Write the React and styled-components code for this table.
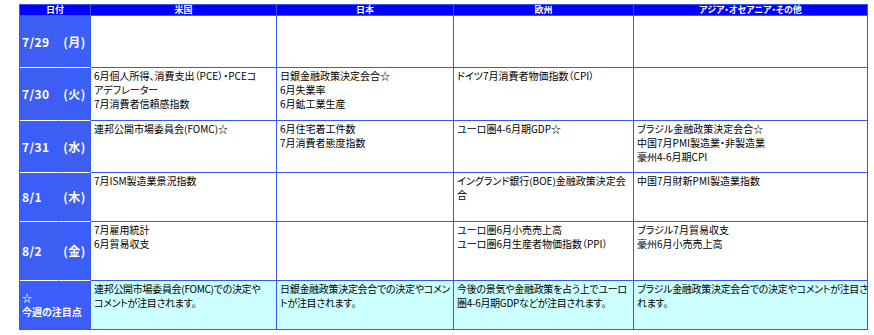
import styled, { createGlobalStyle } from 'styled-components';

const Global = createGlobalStyle`
  body {
    margin: 0;
    background: #fff;
    font-family: "Noto Sans CJK JP", "Noto Sans", sans-serif;
  }
`;

const BORDER = '#3558f0';

const Page = styled.div`
  padding: 4px 0 0 19px;
`;

const Table = styled.table`
  width: 849px;
  table-layout: fixed;
  border-collapse: separate;
  border-spacing: 0;
  border-top: 1px solid ${BORDER};
  border-left: 1px solid ${BORDER};
`;

const Row = styled.tr`
  height: ${p => p.$h}px;
`;

const HeadCell = styled.th`
  padding: 0;
  height: 10px;
  background: #0000ff;
  color: #fff;
  font-size: 9px;
  line-height: 10px;
  font-weight: bold;
  font-feature-settings: "palt";
  text-align: center;
  border-right: 1px solid ${BORDER};
  border-bottom: 1px solid ${BORDER};
  white-space: nowrap;
`;

const DateCell = styled.td`
  padding: 0 2px;
  vertical-align: middle;
  text-align: ${p => (p.$center ? 'center' : 'left')};
  background-color: #3d5ef5;
  background-image: repeating-conic-gradient(#3355ef 0 25%, #4868fb 0 50%);
  background-size: 2px 2px;
  color: #fff;
  font-size: ${p => (p.$small ? 10 : 12)}px;
  line-height: 14px;
  font-weight: bold;
  font-feature-settings: "palt";
  letter-spacing: ${p => (p.$small ? 0 : 0.4)}px;
  border-right: 1px solid ${p => (p.$inner ? 'transparent' : BORDER)};
  border-bottom: 1px solid ${p => (p.$last ? BORDER : '#ffffff')};
  white-space: nowrap;
`;

const Cell = styled.td`
  padding: 1px 0 0 3px;
  vertical-align: top;
  background: ${p => (p.$note ? '#ccffff' : '#fff')};
  color: #000;
  font-size: 10px;
  line-height: 14px;
  letter-spacing: ${p => (p.$note ? -0.3 : 0)}px;
  font-feature-settings: "palt";
  border-right: 1px solid ${BORDER};
  border-bottom: 1px solid ${BORDER};
  white-space: nowrap;
  overflow: hidden;
`;

const Line = styled.div`
  height: 14px;
`;

const rows = [
  { date: '7/29', day: '(月)', h: 52, cells: [[], [], [], []] },
  {
    date: '7/30',
    day: '(火)',
    h: 53,
    cells: [
      ['6月個人所得、消費支出（PCE）・PCEコ', 'アデフレーター', '7月消費者信頼感指数'],
      ['日銀金融政策決定会合☆', '6月失業率', '6月鉱工業生産'],
      ['ドイツ7月消費者物価指数（CPI）'],
      [],
    ],
  },
  {
    date: '7/31',
    day: '(水)',
    h: 52,
    cells: [
      ['連邦公開市場委員会(FOMC)☆'],
      ['6月住宅着工件数', '7月消費者態度指数'],
      ['ユーロ圏4-6月期GDP☆'],
      ['ブラジル金融政策決定会合☆', '中国7月PMI製造業・非製造業', '豪州4-6月期CPI'],
    ],
  },
  {
    date: '8/1',
    day: '(木)',
    h: 49,
    cells: [
      ['7月ISM製造業景況指数'],
      [],
      ['イングランド銀行(BOE)金融政策決定会', '合'],
      ['中国7月財新PMI製造業指数'],
    ],
  },
  {
    date: '8/2',
    day: '(金)',
    h: 59,
    cells: [
      ['7月雇用統計', '6月貿易収支'],
      [],
      ['ユーロ圏6月小売売上高', 'ユーロ圏6月生産者物価指数（PPI）'],
      ['ブラジル7月貿易収支', '豪州6月小売売上高'],
    ],
  },
];

const notes = [
  ['連邦公開市場委員会(FOMC)での決定や', 'コメントが注目されます。'],
  ['日銀金融政策決定会合での決定やコメン', 'トが注目されます。'],
  ['今後の景気や金融政策を占う上でユーロ', '圏4-6月期GDPなどが注目されます。'],
  ['ブラジル金融政策決定会合での決定やコメントが注目さ', 'れます。'],
];

const Lines = ({ items }) => items.map((t, i) => <Line key={i}>{t}</Line>);

const App = () => {
  return (
    <Page>
      <Global />
      <Table>
        <colgroup>
          <col style={{ width: 39 }} />
          <col style={{ width: 32 }} />
          <col style={{ width: 186 }} />
          <col style={{ width: 177 }} />
          <col style={{ width: 180 }} />
          <col style={{ width: 234 }} />
        </colgroup>
        <tbody>
          <Row $h={11}>
            <HeadCell colSpan={2}>日付</HeadCell>
            <HeadCell>米国</HeadCell>
            <HeadCell>日本</HeadCell>
            <HeadCell>欧州</HeadCell>
            <HeadCell>アジア・オセアニア・その他</HeadCell>
          </Row>
          {rows.map(r => (
            <Row key={r.date} $h={r.h}>
              <DateCell $inner>{r.date}</DateCell>
              <DateCell $center>{r.day}</DateCell>
              {r.cells.map((c, i) => (
                <Cell key={i}>
                  <Lines items={c} />
                </Cell>
              ))}
            </Row>
          ))}
          <Row $h={49}>
            <DateCell colSpan={2} $last $small>
              <Line>☆</Line>
              <Line>今週の注目点</Line>
            </DateCell>
            {notes.map((c, i) => (
              <Cell key={i} $note>
                <Lines items={c} />
              </Cell>
            ))}
          </Row>
        </tbody>
      </Table>
    </Page>
  );
};

export default App;
